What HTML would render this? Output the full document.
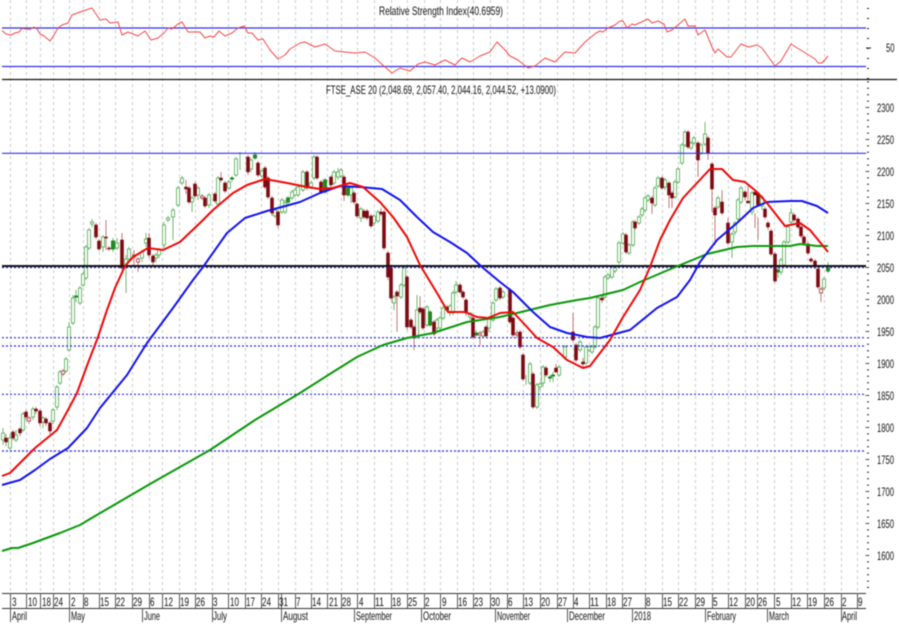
<!DOCTYPE html>
<html><head><meta charset="utf-8"><style>
html,body{margin:0;padding:0;background:#fff;width:899px;height:624px;overflow:hidden}
svg{display:block;filter:blur(.45px)}
text{font-family:"Liberation Sans",sans-serif;font-size:12px;fill:#111}
</style></head><body>
<svg width="899" height="624" viewBox="0 0 899 624" xmlns="http://www.w3.org/2000/svg">
<rect width="899" height="624" fill="#fff"/>
<path fill="none" stroke="#ccc" stroke-dasharray="3 3" d="M10.5 0V593M26.5 0V593M40.5 0V593M53.5 0V593M69.5 0V593M83.5 0V593M99.5 0V593M115.5 0V593M132.5 0V593M149.5 0V593M162.5 0V593M179.5 0V593M195.5 0V593M212.5 0V593M228.5 0V593M245.5 0V593M261.5 0V593M278.5 0V593M295.5 0V593M311.5 0V593M327.5 0V593M341.5 0V593M357.5 0V593M374.5 0V593M391.5 0V593M407.5 0V593M424.5 0V593M440.5 0V593M457.5 0V593M473.5 0V593M490.5 0V593M507.5 0V593M523.5 0V593M540.5 0V593M557.5 0V593M573.5 0V593M589.5 0V593M606.5 0V593M622.5 0V593M645.5 0V593M662.5 0V593M678.5 0V593M695.5 0V593M712.5 0V593M728.5 0V593M745.5 0V593M757.5 0V593M774.5 0V593M791.5 0V593M807.5 0V593M824.5 0V593M841.5 0V593M857.5 0V593"/>
<!-- RSI -->
<path fill="none" stroke="#3030f0" stroke-width="1.3" d="M2 28H866M2 66.5H866"/>
<path fill="none" stroke="#f44848" stroke-linejoin="round" d="M2 30.5L6 34L11 35L15 33L19 32L22 28.5L30 29.5L34 27L37 29L40 34L44 36L50 41L54 35L58 28L62 25L68 23L72 15L80 12L92 8L96 14L100 20L106 19L110 23L118 22L122 35L128 32L138 36L145 31L151 40L158 38L164 33L168 28L172 29L178 24L182 22L188 32L200 32L205 38L210 36L214 37L219 31L225 36L232 33L238 28L244 26L248 33L252 33L258 40L263 39L270 50L278 59L285 55L290 49L300 43L305 42L315 47L325 44L335 51L345 52L355 53L365 52L375 58L385 67L392 73L400 68L410 71L418 64L425 62L435 65L445 60L455 65L462 58L470 62L480 56L490 52L497 42L505 50L510 56L518 60L528 68L535 66L545 58L555 62L565 52L575 53L585 42L590 38L596 33L600 31L603 32L608 28L615 25L620 21L623 21L627 28L632 24L635 25L648 19L652 23L658 21L664 24L667 32L672 30L685 19L688 26L695 26L698 35L705 30L712 47L715 53L718 49L727 57L731 57L741 44L748 47L757 45L762 48L775 66L781 61L791 44L815 59L818 63L822 63L828 56"/>
<path fill="none" stroke="#111" stroke-width="1.2" d="M2 79.5H897"/>
<!-- candle wicks -->
<path fill="none" stroke="#6fb96f" d="M3 428V445M10 434V450M16 430V442M23 412V432M33 407V420M43 416V428M53 408V424M57 385V410M60 370V385M66 357V373M69 322V352M73 295V325M76 290V302M80 286V305M83 272V287M86 245V280M89 228V250M92 219V227M103 235V252M113 238V252M117 238V250M126 255V293M129 247V262M142 250V262M146 233V247M156 253V262M159 248V258M164 222V248M168 216V222M173 208V240M178 186V207M182 176V185M192 196V212M198 186V200M209 193V208M218 176V206M229 180V190M232 176V182M236 157V177M240 152V170M251 158V172M255 152V160M262 169V178M275 208V218M282 198V214M285 200V214M288 196V204M292 190V200M295 188V197M298 185V197M303 170V192M311 181V189M314 155V180M325 178V194M334 170V185M338 168V180M341 168V178M348 186V197M351 186V203M361 207V222M374 214V226M378 210V223M394 295V310M401 283V299M404 266V287M417 295V339M427 305V327M430 310V327M437 318V333M440 316V330M443 306V320M450 304V316M453 291V315M456 281V294M470 312V320M476 330V337M483 330V338M489 316V332M493 301V322M496 287V302M503 290V299M526 375V385M530 362V385M537 383V409M540 382V390M543 365V387M550 375V382M553 372V382M559 365V377M565 345V360M580 340V352M586 345V365M589 345V352M592 345V354M595 325V349M598 296V329M605 275V299M608 273V280M612 265V279M615 265V273M619 241V264M623 232V245M629 243V255M633 220V247M639 215V225M642 207V217M645 196V212M648 194V202M655 186V207M658 176V188M665 178V190M675 180V199M678 167V184M682 143V165M685 130V147M691 141V150M694 136V145M701 143V155M705 122V146M718 196V209M732 232V258M735 221V235M738 198V221M741 186V204M752 191V215M762 195V210M778 266V278M781 258V275M784 240V267M788 225V244M791 208V224M824 277V290M828 262V273"/>
<path fill="none" stroke="#c47a7a" d="M6 434V446M13 430V440M20 427V436M26 410V420M29 416V424M36 407V414M40 409V426M46 417V426M50 421V434M63 369V376M96 223V239M99 239V251M106 220V250M109 246V251M122 233V270M134 250V265M138 257V272M149 233V258M153 254V265M186 180V194M189 186V204M195 182V198M202 194V200M205 196V208M215 192V203M221 172V182M225 181V193M248 155V175M258 161V177M265 166V189M268 176V199M272 196V216M278 210V228M307 170V190M317 155V180M321 180V194M331 175V187M344 175V201M354 191V204M357 202V218M364 209V219M367 209V220M371 214V228M381 208V216M384 210V250M388 251V280M391 266V300M397 290V332M407 275V330M411 318V329M414 325V350M420 296V314M423 307V330M434 320V336M447 305V312M460 283V294M463 290V299M466 298V316M473 316V339M480 331V345M486 325V338M500 286V300M510 288V324M513 316V337M517 330V338M520 330V349M523 353V381M533 372V409M546 366V377M556 364V373M573 313V342M576 343V362M583 358V368M602 296V303M626 233V254M635 220V230M652 196V214M662 176V190M669 181V208M672 191V208M688 130V149M698 141V177M708 136V160M712 162V212M715 206V245M722 190V215M728 218V245M745 190V200M748 186V200M755 213V228M758 218V240M765 207V219M768 221V230M771 229V256M775 252V283M794 213V222M798 217V229M801 225V238M804 235V245M808 242V255M811 257V263M815 259V269M818 267V289M821 287V302"/>
<!-- up bodies -->
<path fill="#fff" stroke="#6fb96f" d="M1.5 433h3V440h-3zM8.5 438h3V448h-3zM14.5 435h3V440h-3zM21.5 414h3V430h-3zM31.5 409h3V417h-3zM41.5 418h3V422h-3zM51.5 410h3V421h-3zM55.5 387h3V407h-3zM58.5 372h3V383h-3zM64.5 359h3V371h-3zM67.5 327h3V350h-3zM71.5 298h3V323h-3zM78.5 288h3V303h-3zM81.5 274h3V285h-3zM84.5 247h3V278h-3zM87.5 230h3V248h-3zM90.5 222h3V224h-3zM101.5 237h3V247h-3zM115.5 243h3V248h-3zM124.5 259h3V268h-3zM127.5 249h3V259h-3zM140.5 252h3V258h-3zM144.5 239h3V243h-3zM154.5 255h3V258h-3zM157.5 250h3V255h-3zM162.5 225h3V245h-3zM166.5 218h3V220h-3zM171.5 210h3V217h-3zM176.5 188h3V205h-3zM180.5 178h3V183h-3zM190.5 198h3V202h-3zM196.5 188h3V195h-3zM207.5 195h3V205h-3zM216.5 178h3V204h-3zM227.5 182h3V188h-3zM234.5 159h3V175h-3zM249.5 160h3V169h-3zM260.5 171h3V176h-3zM273.5 210h3V216h-3zM280.5 200h3V212h-3zM283.5 203h3V212h-3zM290.5 192h3V198h-3zM293.5 190h3V195h-3zM296.5 187h3V195h-3zM301.5 172h3V190h-3zM309.5 183h3V187h-3zM312.5 157h3V178h-3zM332.5 172h3V183h-3zM336.5 172h3V177h-3zM339.5 170h3V176h-3zM349.5 188h3V195h-3zM359.5 209h3V218h-3zM372.5 216h3V223h-3zM376.5 212h3V221h-3zM392.5 297h3V303h-3zM399.5 285h3V297h-3zM402.5 268h3V285h-3zM415.5 310h3V337h-3zM425.5 307h3V325h-3zM435.5 320h3V328h-3zM438.5 318h3V328h-3zM441.5 308h3V318h-3zM448.5 306h3V313h-3zM451.5 293h3V313h-3zM454.5 285h3V292h-3zM468.5 313h3V317h-3zM481.5 332h3V336h-3zM487.5 318h3V328h-3zM491.5 303h3V320h-3zM494.5 289h3V300h-3zM501.5 292h3V297h-3zM528.5 364h3V383h-3zM535.5 385h3V407h-3zM538.5 384h3V387h-3zM541.5 367h3V383h-3zM557.5 367h3V375h-3zM563.5 347h3V357h-3zM578.5 342h3V350h-3zM584.5 347h3V363h-3zM587.5 347h3V350h-3zM590.5 347h3V352h-3zM593.5 327h3V347h-3zM596.5 298h3V327h-3zM603.5 277h3V297h-3zM606.5 275h3V278h-3zM610.5 267h3V277h-3zM613.5 267h3V271h-3zM617.5 243h3V262h-3zM621.5 234h3V243h-3zM627.5 245h3V253h-3zM631.5 222h3V245h-3zM637.5 217h3V223h-3zM640.5 209h3V215h-3zM643.5 198h3V210h-3zM646.5 196h3V200h-3zM653.5 188h3V205h-3zM656.5 178h3V186h-3zM663.5 180h3V187h-3zM673.5 182h3V197h-3zM676.5 169h3V182h-3zM680.5 145h3V163h-3zM683.5 132h3V145h-3zM689.5 143h3V148h-3zM692.5 138h3V143h-3zM699.5 145h3V153h-3zM703.5 134h3V144h-3zM716.5 198h3V207h-3zM730.5 234h3V242h-3zM733.5 223h3V232h-3zM736.5 200h3V219h-3zM739.5 188h3V202h-3zM750.5 193h3V212h-3zM760.5 197h3V206h-3zM779.5 260h3V272h-3zM782.5 242h3V265h-3zM786.5 227h3V242h-3zM789.5 213h3V222h-3zM822.5 279h3V288h-3z"/>
<!-- dark green small bodies -->
<path fill="#1f8a1f" stroke="#1f8a1f" d="M74.5 296h3V297h-3zM111.5 241h3V249h-3zM230.5 178h3V179h-3zM253.5 155h3V158h-3zM286.5 198h3V202h-3zM323.5 180h3V192h-3zM346.5 188h3V195h-3zM428.5 312h3V325h-3zM474.5 333h3V335h-3zM548.5 377h3V378h-3zM551.5 375h3V376h-3zM776.5 270h3V272h-3zM826.5 268h3V271h-3z"/>
<!-- down hollow small -->
<path fill="#fff" stroke="#b85a5a" d="M27.5 418h3V421h-3zM61.5 371h3V374h-3zM132.5 255h3V257h-3zM136.5 259h3V262h-3zM200.5 196h3V198h-3zM478.5 333h3V335h-3zM515.5 333h3V335h-3zM819.5 289h3V293h-3z"/>
<!-- down bodies -->
<path fill="#7d0a12" stroke="#7d0a12" stroke-width=".6" d="M4.5 438h3V442h-3zM11.5 432h3V438h-3zM18.5 429h3V433h-3zM24.5 412h3V417h-3zM34.5 409h3V411h-3zM38.5 411h3V423h-3zM44.5 419h3V423h-3zM48.5 423h3V431h-3zM94.5 225h3V237h-3zM97.5 241h3V249h-3zM104.5 237h3V238h-3zM107.5 248h3V249h-3zM120.5 240h3V268h-3zM147.5 238h3V255h-3zM151.5 256h3V262h-3zM184.5 187h3V189h-3zM187.5 188h3V202h-3zM193.5 184h3V196h-3zM203.5 198h3V206h-3zM213.5 194h3V201h-3zM219.5 178h3V180h-3zM223.5 183h3V191h-3zM246.5 157h3V172h-3zM256.5 163h3V175h-3zM263.5 168h3V187h-3zM266.5 178h3V197h-3zM270.5 198h3V213h-3zM276.5 212h3V225h-3zM305.5 172h3V188h-3zM315.5 157h3V178h-3zM319.5 182h3V192h-3zM329.5 177h3V185h-3zM342.5 177h3V195h-3zM352.5 193h3V202h-3zM355.5 204h3V216h-3zM362.5 211h3V217h-3zM365.5 211h3V218h-3zM369.5 216h3V226h-3zM379.5 212h3V214h-3zM382.5 212h3V248h-3zM386.5 253h3V277h-3zM389.5 268h3V298h-3zM395.5 292h3V296h-3zM405.5 277h3V327h-3zM409.5 320h3V327h-3zM412.5 327h3V338h-3zM418.5 308h3V312h-3zM421.5 309h3V328h-3zM432.5 322h3V334h-3zM445.5 307h3V310h-3zM458.5 285h3V292h-3zM461.5 292h3V297h-3zM464.5 300h3V313h-3zM471.5 318h3V337h-3zM484.5 327h3V336h-3zM498.5 288h3V298h-3zM508.5 290h3V322h-3zM511.5 318h3V335h-3zM518.5 332h3V347h-3zM521.5 355h3V379h-3zM531.5 374h3V407h-3zM544.5 368h3V375h-3zM554.5 368h3V372h-3zM571.5 332h3V340h-3zM574.5 345h3V360h-3zM581.5 362h3V364h-3zM600.5 298h3V300h-3zM624.5 235h3V252h-3zM633.5 222h3V228h-3zM650.5 198h3V203h-3zM660.5 178h3V188h-3zM667.5 183h3V195h-3zM670.5 193h3V198h-3zM686.5 132h3V147h-3zM696.5 143h3V160h-3zM706.5 138h3V153h-3zM710.5 164h3V189h-3zM713.5 208h3V215h-3zM720.5 202h3V213h-3zM726.5 223h3V243h-3zM743.5 192h3V197h-3zM746.5 201h3V203h-3zM753.5 192h3V195h-3zM756.5 193h3V205h-3zM763.5 209h3V217h-3zM766.5 223h3V227h-3zM769.5 231h3V254h-3zM773.5 254h3V281h-3zM792.5 215h3V220h-3zM796.5 219h3V227h-3zM799.5 227h3V236h-3zM802.5 237h3V243h-3zM806.5 244h3V253h-3zM809.5 259h3V261h-3zM813.5 261h3V267h-3zM816.5 269h3V287h-3z"/>
<!-- horizontal levels -->
<path fill="none" stroke="#3030f0" stroke-width="1.2" d="M2 153.3H866"/>
<path fill="none" stroke="#2020f0" stroke-width="1.2" stroke-dasharray="2 2" d="M2 267.5H866M2 337.7H866M2 346H866M2 394.3H866M2 451H866"/>
<path fill="none" stroke="#151515" stroke-width="2" d="M2 266H866"/>
<!-- moving averages -->
<path fill="none" stroke="#0a980a" stroke-width="2" stroke-linejoin="round" d="M2 551L12 548L18 548L33 543L60 533L80 525L90 519L150 484L210 450L255 420L300 393L333 372L357 357L383 345L407 338L433 333L467 322L500 317L517 313L550 305L577 300L590 298L623 290L640 282L673 268L707 254L737 247L753 246L790 246L800 244L817 246L828 246"/>
<path fill="none" stroke="#1414f0" stroke-width="2" stroke-linejoin="round" d="M2 485L20 480L35 470L50 459L68 448L87 428L100 408L127 375L147 343L173 308L193 280L203 267L227 233L245 218L267 211L300 202L320 193L340 186L360 187L382 189L400 200L417 217L433 232L450 242L467 253L482 267L500 282L513 292L533 312L550 327L567 333L587 337L600 338L630 330L657 308L677 297L690 280L700 262L717 240L737 223L753 208L767 202L790 201L802 201L817 206L828 213"/>
<path fill="none" stroke="#f00808" stroke-width="2" stroke-linejoin="round" d="M2 476L10 473L20 463L35 448L57 430L68 410L77 393L88 363L98 337L107 310L115 288L125 266L133 257L148 248L163 250L180 242L200 223L213 210L233 193L247 185L265 179L287 183L307 187L320 189L333 188L350 183L363 187L380 202L393 217L407 237L420 265L437 293L448 312L465 312L477 317L488 318L500 313L513 312L527 327L537 338L553 347L567 360L583 368L590 366L600 353L610 340L623 317L640 290L650 267L660 240L670 220L683 198L697 183L710 169L722 169L733 180L745 182L757 192L767 203L785 226L800 223L810 230L828 252"/>
<!-- right axis ticks -->
<path fill="none" stroke="#222" stroke-width="2" stroke-dasharray="1 9" d="M868 8V80"/>
<path fill="none" stroke="#222" stroke-width="2" stroke-dasharray="1 5.4" d="M868 81.4V590"/>
<path fill="none" stroke="#222" stroke-dasharray="1 31" stroke-width="1" d="M866 107V560"/>
<path fill="none" stroke="#222" d="M866 48H871"/>
<!-- bottom axis -->
<path fill="none" stroke="#333" d="M2 593.5H866M2 608.5H866"/>
<path fill="none" stroke="#555" d="M10.5 593V622M26.5 593V608M40.5 593V608M53.5 593V608M69.5 593V622M83.5 593V608M99.5 593V608M115.5 593V608M132.5 593V608M142.5 608V622M149.5 593V608M162.5 593V608M179.5 593V608M195.5 593V608M212.5 593V622M228.5 593V608M245.5 593V608M261.5 593V608M278.5 593V608M281.5 593V622M295.5 593V608M311.5 593V608M327.5 593V608M341.5 593V608M354.5 608V622M357.5 593V608M374.5 593V608M391.5 593V608M407.5 593V608M421.5 608V622M424.5 593V608M440.5 593V608M457.5 593V608M473.5 593V608M490.5 593V608M495.5 608V622M507.5 593V608M523.5 593V608M540.5 593V608M557.5 593V608M567.5 608V622M573.5 593V608M589.5 593V608M606.5 593V608M622.5 593V608M632.5 608V622M645.5 593V608M662.5 593V608M678.5 593V608M695.5 593V608M705.5 608V622M712.5 593V608M728.5 593V608M745.5 593V608M757.5 593V608M767.5 608V622M774.5 593V608M791.5 593V608M807.5 593V608M824.5 593V608M841.5 593V622M857.5 593V608"/>
<!-- titles -->
<text x="379" y="15" textLength="124" lengthAdjust="spacingAndGlyphs">Relative Strength Index(40.6959)</text>
<text x="326" y="94" textLength="230" lengthAdjust="spacingAndGlyphs">FTSE_ASE 20 (2,048.69, 2,057.40, 2,044.16, 2,044.52, +13.0900)</text>
<!-- y labels -->
<text x="886" y="52" textLength="8.5" lengthAdjust="spacingAndGlyphs">50</text>
<text x="877" y="112" textLength="17" lengthAdjust="spacingAndGlyphs">2300</text>
<text x="877" y="144" textLength="17" lengthAdjust="spacingAndGlyphs">2250</text>
<text x="877" y="176" textLength="17" lengthAdjust="spacingAndGlyphs">2200</text>
<text x="877" y="208" textLength="17" lengthAdjust="spacingAndGlyphs">2150</text>
<text x="877" y="240" textLength="17" lengthAdjust="spacingAndGlyphs">2100</text>
<text x="877" y="272" textLength="17" lengthAdjust="spacingAndGlyphs">2050</text>
<text x="877" y="304" textLength="17" lengthAdjust="spacingAndGlyphs">2000</text>
<text x="877" y="336" textLength="17" lengthAdjust="spacingAndGlyphs">1950</text>
<text x="877" y="368" textLength="17" lengthAdjust="spacingAndGlyphs">1900</text>
<text x="877" y="400" textLength="17" lengthAdjust="spacingAndGlyphs">1850</text>
<text x="877" y="432" textLength="17" lengthAdjust="spacingAndGlyphs">1800</text>
<text x="877" y="464" textLength="17" lengthAdjust="spacingAndGlyphs">1750</text>
<text x="877" y="496" textLength="17" lengthAdjust="spacingAndGlyphs">1700</text>
<text x="877" y="528" textLength="17" lengthAdjust="spacingAndGlyphs">1650</text>
<text x="877" y="560" textLength="17" lengthAdjust="spacingAndGlyphs">1600</text>
<!-- day labels -->
<g id="d">
<text x="12" y="606" textLength="4.5" lengthAdjust="spacingAndGlyphs">3</text>
<text x="28" y="606" textLength="9" lengthAdjust="spacingAndGlyphs">10</text>
<text x="42" y="606" textLength="9" lengthAdjust="spacingAndGlyphs">18</text>
<text x="54" y="606" textLength="9" lengthAdjust="spacingAndGlyphs">24</text>
<text x="71" y="606" textLength="4.5" lengthAdjust="spacingAndGlyphs">2</text>
<text x="84" y="606" textLength="4.5" lengthAdjust="spacingAndGlyphs">8</text>
<text x="100" y="606" textLength="9" lengthAdjust="spacingAndGlyphs">15</text>
<text x="116" y="606" textLength="9" lengthAdjust="spacingAndGlyphs">22</text>
<text x="133" y="606" textLength="9" lengthAdjust="spacingAndGlyphs">29</text>
<text x="150" y="606" textLength="4.5" lengthAdjust="spacingAndGlyphs">6</text>
<text x="164" y="606" textLength="9" lengthAdjust="spacingAndGlyphs">12</text>
<text x="180" y="606" textLength="9" lengthAdjust="spacingAndGlyphs">19</text>
<text x="196" y="606" textLength="9" lengthAdjust="spacingAndGlyphs">26</text>
<text x="213" y="606" textLength="4.5" lengthAdjust="spacingAndGlyphs">3</text>
<text x="230" y="606" textLength="9" lengthAdjust="spacingAndGlyphs">10</text>
<text x="246" y="606" textLength="9" lengthAdjust="spacingAndGlyphs">17</text>
<text x="262" y="606" textLength="9" lengthAdjust="spacingAndGlyphs">24</text>
<text x="279" y="606" textLength="9" lengthAdjust="spacingAndGlyphs">31</text>
<text x="296" y="606" textLength="4.5" lengthAdjust="spacingAndGlyphs">7</text>
<text x="312" y="606" textLength="9" lengthAdjust="spacingAndGlyphs">14</text>
<text x="329" y="606" textLength="9" lengthAdjust="spacingAndGlyphs">21</text>
<text x="342" y="606" textLength="9" lengthAdjust="spacingAndGlyphs">28</text>
<text x="359" y="606" textLength="4.5" lengthAdjust="spacingAndGlyphs">4</text>
<text x="375" y="606" textLength="9" lengthAdjust="spacingAndGlyphs">11</text>
<text x="392" y="606" textLength="9" lengthAdjust="spacingAndGlyphs">18</text>
<text x="408" y="606" textLength="9" lengthAdjust="spacingAndGlyphs">25</text>
<text x="425" y="606" textLength="4.5" lengthAdjust="spacingAndGlyphs">2</text>
<text x="442" y="606" textLength="4.5" lengthAdjust="spacingAndGlyphs">9</text>
<text x="458" y="606" textLength="9" lengthAdjust="spacingAndGlyphs">16</text>
<text x="474" y="606" textLength="9" lengthAdjust="spacingAndGlyphs">23</text>
<text x="491" y="606" textLength="9" lengthAdjust="spacingAndGlyphs">30</text>
<text x="508" y="606" textLength="4.5" lengthAdjust="spacingAndGlyphs">6</text>
<text x="524" y="606" textLength="9" lengthAdjust="spacingAndGlyphs">13</text>
<text x="541" y="606" textLength="9" lengthAdjust="spacingAndGlyphs">20</text>
<text x="558" y="606" textLength="9" lengthAdjust="spacingAndGlyphs">27</text>
<text x="574" y="606" textLength="4.5" lengthAdjust="spacingAndGlyphs">4</text>
<text x="590" y="606" textLength="9" lengthAdjust="spacingAndGlyphs">11</text>
<text x="607" y="606" textLength="9" lengthAdjust="spacingAndGlyphs">18</text>
<text x="623" y="606" textLength="9" lengthAdjust="spacingAndGlyphs">27</text>
<text x="646" y="606" textLength="4.5" lengthAdjust="spacingAndGlyphs">8</text>
<text x="663" y="606" textLength="9" lengthAdjust="spacingAndGlyphs">15</text>
<text x="679" y="606" textLength="9" lengthAdjust="spacingAndGlyphs">22</text>
<text x="696" y="606" textLength="9" lengthAdjust="spacingAndGlyphs">29</text>
<text x="713" y="606" textLength="4.5" lengthAdjust="spacingAndGlyphs">5</text>
<text x="729" y="606" textLength="9" lengthAdjust="spacingAndGlyphs">12</text>
<text x="746" y="606" textLength="9" lengthAdjust="spacingAndGlyphs">20</text>
<text x="758" y="606" textLength="9" lengthAdjust="spacingAndGlyphs">26</text>
<text x="776" y="606" textLength="4.5" lengthAdjust="spacingAndGlyphs">5</text>
<text x="792" y="606" textLength="9" lengthAdjust="spacingAndGlyphs">12</text>
<text x="808" y="606" textLength="9" lengthAdjust="spacingAndGlyphs">19</text>
<text x="825" y="606" textLength="9" lengthAdjust="spacingAndGlyphs">26</text>
<text x="842" y="606" textLength="4.5" lengthAdjust="spacingAndGlyphs">2</text>
<text x="858" y="606" textLength="4.5" lengthAdjust="spacingAndGlyphs">9</text>
</g>
<!-- month labels -->
<text x="12" y="620" textLength="15" lengthAdjust="spacingAndGlyphs">April</text>
<text x="71" y="620" textLength="14" lengthAdjust="spacingAndGlyphs">May</text>
<text x="144" y="620" textLength="16" lengthAdjust="spacingAndGlyphs">June</text>
<text x="213" y="620" textLength="14" lengthAdjust="spacingAndGlyphs">July</text>
<text x="283" y="620" textLength="25" lengthAdjust="spacingAndGlyphs">August</text>
<text x="356" y="620" textLength="36" lengthAdjust="spacingAndGlyphs">September</text>
<text x="423" y="620" textLength="28" lengthAdjust="spacingAndGlyphs">October</text>
<text x="497" y="620" textLength="33" lengthAdjust="spacingAndGlyphs">November</text>
<text x="569" y="620" textLength="36" lengthAdjust="spacingAndGlyphs">December</text>
<text x="634" y="620" textLength="17" lengthAdjust="spacingAndGlyphs">2018</text>
<text x="707" y="620" textLength="29" lengthAdjust="spacingAndGlyphs">February</text>
<text x="769" y="620" textLength="20" lengthAdjust="spacingAndGlyphs">March</text>
<text x="842" y="620" textLength="15" lengthAdjust="spacingAndGlyphs">April</text>
</svg>
</body></html>
